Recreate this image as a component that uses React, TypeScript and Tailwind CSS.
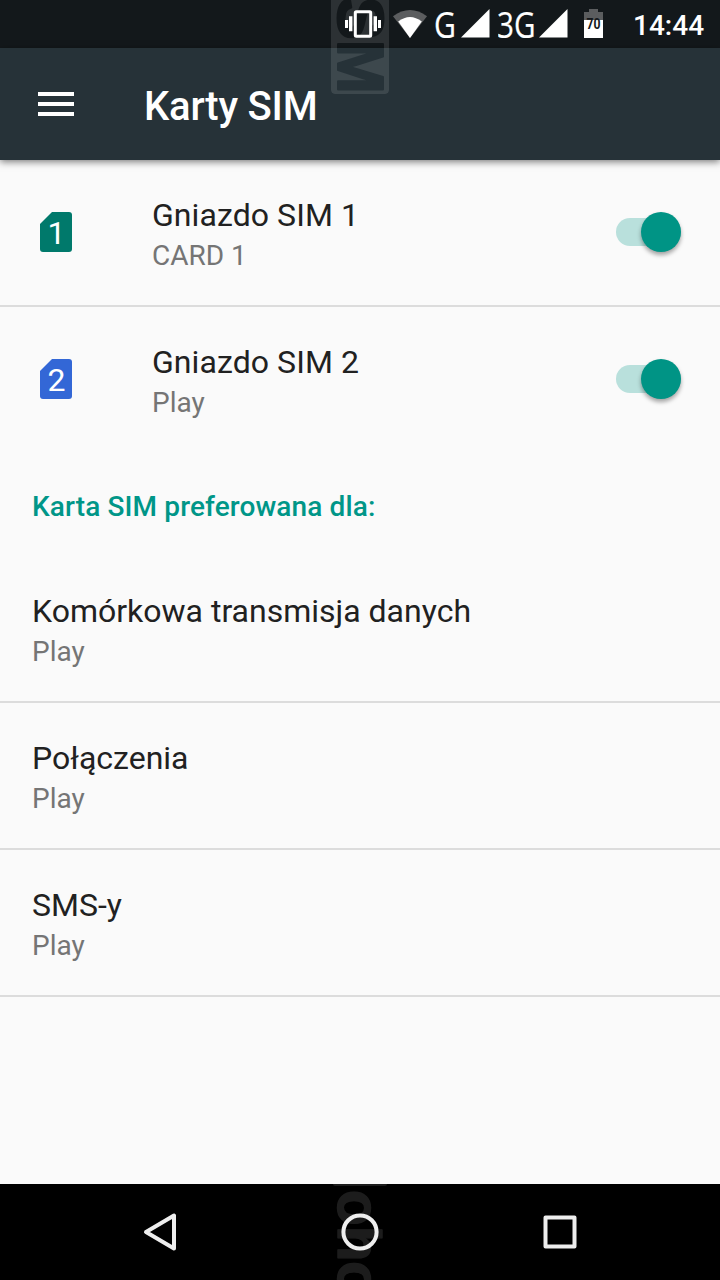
import { useState } from 'react'

interface SimSlot {
  id: number
  title: string
  carrier: string
  color: string
}

const slots: SimSlot[] = [
  { id: 1, title: 'Gniazdo SIM 1', carrier: 'CARD 1', color: '#00796b' },
  { id: 2, title: 'Gniazdo SIM 2', carrier: 'Play', color: '#3367d6' },
]

const preferences = [
  { title: 'Komórkowa transmisja danych', value: 'Play' },
  { title: 'Połączenia', value: 'Play' },
  { title: 'SMS-y', value: 'Play' },
]

function StatusBar() {
  return (
    <div className="flex h-12 shrink-0 items-center bg-[#13181b] pl-[344px] text-white">
      <svg className="h-12 w-[38px] shrink-0" viewBox="0 0 38 48" fill="white">
        <path d="M1 20h3v8H1zM5 16.3h3.4v15H5zM29.6 16.3H33v15h-3.4zM34 20h3v8h-3z" />
        <rect x="11.3" y="11.8" width="15.4" height="24.4" rx="1" fill="none" stroke="white" strokeWidth="3" />
      </svg>
      <svg className="ml-2.5 h-12 w-9 shrink-0" viewBox="0 0 36 48">
        <path d="M1 16.3Q18 3.7 35 16.3L18 38z" fill="#5b5d5f" />
        <path d="M6.2 21.6Q18 12.5 29.8 21.6L18 38z" fill="white" />
      </svg>
      <Network label="G" />
      <Network label="3G" />
      <svg className="ml-4 h-12 w-5 shrink-0" viewBox="0 0 20 48">
        <path d="M0 12h5V9h9v3h5v8H0z" fill="#5b5d5f" />
        <path d="M0 20h19v18H0z" fill="white" />
        <text x="9.5" y="29" fontFamily="Roboto" fontWeight="700" fontSize="15" textAnchor="middle" textLength="14" lengthAdjust="spacingAndGlyphs" fill="#14181b">70</text>
      </svg>
      <span className="ml-[29px] mt-[3px] text-[28px] font-medium leading-8">14:44</span>
    </div>
  )
}

function Network({ label }: { label: string }) {
  const wide = label.length > 1
  return (
    <svg className={wide ? 'ml-2 h-12 w-[70px] shrink-0' : 'ml-1.5 h-12 w-14 shrink-0'} viewBox={wide ? '0 0 70 48' : '0 0 56 48'}>
      <text x={wide ? -1 : 0} y="37.5" fontFamily="Open Sans" fontSize="36" textLength={wide ? 38.5 : 22} lengthAdjust="spacingAndGlyphs" fill="white" stroke="white" strokeWidth="0.2">{label}</text>
      <path d={wide ? 'M69.5 9v28.5H41z' : 'M55.5 9v28.5H27z'} fill="white" />
    </svg>
  )
}

function Toggle({ label }: { label: string }) {
  const [on, setOn] = useState(true)

  return (
    <button
      role="switch"
      aria-checked={on}
      aria-label={label}
      onClick={() => setOn(!on)}
      className="mr-[39px] flex h-10 w-[65px] items-center"
    >
      <span className={`flex h-7 w-full items-center rounded-full ${on ? 'justify-end bg-[#b9e0dc]' : 'justify-start bg-gray-300'}`}>
        <span className={`size-10 shrink-0 rounded-full shadow-[0_3px_4px_rgba(0,0,0,0.35)] ${on ? 'bg-[#009485]' : 'bg-gray-100'}`} />
      </span>
    </button>
  )
}

function SlotRow({ slot }: { slot: SimSlot }) {
  return (
    <div className="flex h-[147px] items-center border-b-2 border-[#dcdcdc] pb-px last:border-transparent">
      <svg className="ml-10 h-10 w-8 shrink-0" viewBox="0 0 32 40">
        <path d="M12 0h17q3 0 3 3v34q0 3-3 3H3q-3 0-3-3V12z" fill={slot.color} />
        <text x="16.5" y="32" fontFamily="Roboto" fontSize="32" textAnchor="middle" fill="white">{slot.id}</text>
      </svg>
      <div className="ml-20 flex-1 pt-[7px]">
        <div className="text-[32px] leading-[41px] tracking-[0.07px] text-[#212121]">{slot.title}</div>
        <div className="text-[28px] leading-[40px] text-[#757575]">{slot.carrier}</div>
      </div>
      <Toggle label={slot.title} />
    </div>
  )
}

// Faint rotated lettering that lies over the system bars
function Watermark() {
  return (
    <svg className="pointer-events-none absolute inset-0 h-[1280px] w-[720px]" viewBox="0 0 720 1280">
      <defs>
        <mask id="label-cut">
          <rect x="331" y="-80" width="58" height="174" rx="4" fill="white" />
          <text transform="translate(337.5 -54) rotate(90)" fontFamily="Liberation Sans" fontWeight="700" fontSize="65" textLength="148" lengthAdjust="spacingAndGlyphs" fill="black" stroke="black" strokeWidth="2" strokeLinejoin="round">GSM</text>
        </mask>
      </defs>
      <rect x="331" y="-80" width="58" height="174" rx="4" fill="white" fillOpacity="0.11" mask="url(#label-cut)" />
      <rect x="333" y="1180" width="54" height="6" rx="2" fill="white" fillOpacity="0.11" />
      <g opacity="0.11">
        <text transform="translate(338 1190) rotate(90)" fontFamily="Liberation Sans" fontWeight="700" fontSize="62" fill="white" stroke="white" strokeWidth="1.4" strokeLinejoin="round" textLength="107" lengthAdjust="spacingAndGlyphs">oho</text>
      </g>
    </svg>
  )
}

export default function App() {
  return (
    <div className="relative flex h-[1280px] w-[720px] flex-col overflow-hidden bg-[#fafafa] font-['Roboto',sans-serif]">
      <StatusBar />
      <header className="flex h-28 shrink-0 items-center bg-[#263238] shadow-[0_2px_7px_rgba(0,0,0,0.5)]">
        <button aria-label="Menu" className="ml-[38px] flex w-9 flex-col gap-1.5">
          <span className="h-1 bg-white" />
          <span className="h-1 bg-white" />
          <span className="h-1 bg-white" />
        </button>
        <h1 className="ml-[70px] mt-1.5 text-[40px] font-medium leading-[48px] tracking-[-0.2px] text-white">Karty SIM</h1>
      </header>

      <main className="flex-1">
        <div>
          {slots.map((slot) => (
            <SlotRow key={slot.id} slot={slot} />
          ))}
        </div>
        <h2 className="mt-5 flex h-[66px] items-center pl-8 text-[28px] font-medium tracking-[0.12px] text-[#009688]">
          Karta SIM preferowana dla:
        </h2>
        <div className="mt-4">
          {preferences.map((item) => (
            <div key={item.title} className="h-[147px] border-b-2 border-[#dcdcdc] pl-8 pt-[35px]">
              <div className="text-[32px] leading-[41px] text-[#212121]">{item.title}</div>
              <div className="text-[28px] leading-[40px] text-[#757575]">{item.value}</div>
            </div>
          ))}
        </div>
      </main>

      <nav className="flex h-24 shrink-0 items-center justify-center gap-40 bg-black">
        <button aria-label="Wstecz">
          <svg className="size-10" viewBox="0 0 40 40" fill="none" stroke="#eee" strokeWidth="4" strokeLinejoin="round">
            <path d="M34 3.5v33L6 20z" />
          </svg>
        </button>
        <button aria-label="Ekran główny">
          <svg className="size-10" viewBox="0 0 40 40" fill="none" stroke="#eee" strokeWidth="4">
            <circle cx="20" cy="20" r="16.6" />
          </svg>
        </button>
        <button aria-label="Ostatnie">
          <svg className="size-10" viewBox="0 0 40 40" fill="none" stroke="#eee" strokeWidth="4" strokeLinejoin="round">
            <rect x="5.5" y="5.5" width="29" height="29" />
          </svg>
        </button>
      </nav>
      <Watermark />
    </div>
  )
}
